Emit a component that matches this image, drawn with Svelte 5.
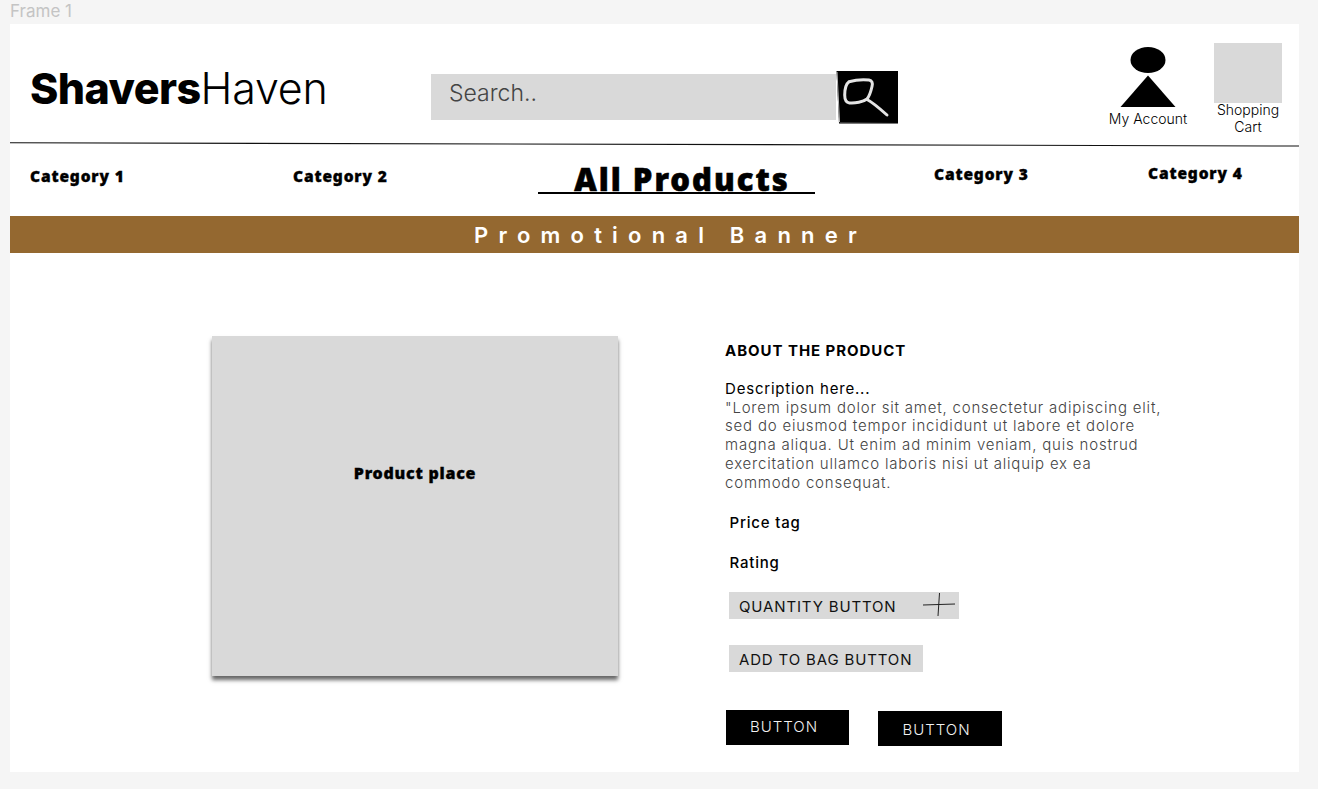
<script>
    const lorem = [
        '"Lorem ipsum dolor sit amet, consectetur adipiscing elit,',
        "sed do eiusmod tempor incididunt ut labore et dolore",
        "magna aliqua. Ut enim ad minim veniam, quis nostrud",
        "exercitation ullamco laboris nisi ut aliquip ex ea",
        "commodo consequat."
    ];
</script>

<div class="page">
    <div class="frame-label">Frame 1</div>
    <div class="frame">
        <header>
            <div class="logo"><b>Shavers</b>Haven</div>
            <div class="search">
                <div class="search-input">Search..</div>
                <button class="search-btn" aria-label="Search">
                    <svg width="62" height="53" viewBox="0 0 62 53">
                        <path d="M0.5 0 L62 0 L62 52.5 L3 52.5 Z" fill="#000" />
                        <path d="M1 1 L3.5 51" stroke="#bbb" stroke-width="1" fill="none" />
                        <path d="M3.5 52 L62 52.5" stroke="#777" stroke-width="1" fill="none" />
                        <path
                            d="M13 10.7 C19 9 28 8.5 33 9 C36 9.5 37 12 36 15.5 C35 20 33.5 25 31 28 C27 31 19 32.5 13.5 32 C10 31.5 8.7 28 8.7 24 C8.7 19 10 13 13 10.7 Z M31 28.5 C36 31 42 36 51 44"
                            stroke="#e4e4e4"
                            stroke-width="3"
                            stroke-linecap="round"
                            fill="none"
                        />
                    </svg>
                </button>
            </div>
            <div class="account">
                <svg width="56" height="61" viewBox="0 0 56 61">
                    <ellipse cx="28" cy="13" rx="17.5" ry="13" />
                    <path d="M28 28.5 L55.5 60 L0.5 60 Z" />
                </svg>
                <span>My Account</span>
            </div>
            <div class="cart">
                <div class="cart-box"></div>
                <span>Shopping<br />Cart</span>
            </div>
        </header>

        <svg class="rule" width="1289" height="5" viewBox="0 0 1289 5">
            <path d="M0 0.8 L1289 4" stroke="#111" stroke-width="1.1" />
        </svg>

        <nav>
            <a class="cat cat-1" href="#c1">Category 1</a>
            <a class="cat cat-2" href="#c2">Category 2</a>
            <a class="all" href="#all">All Products</a>
            <a class="cat cat-3" href="#c3">Category 3</a>
            <a class="cat cat-4" href="#c4">Category 4</a>
        </nav>

        <div class="banner">Promotional Banner</div>

        <main>
            <div class="product">Product place</div>
            <section class="info">
                <h2>ABOUT THE PRODUCT</h2>
                <p class="desc-title">Description here...</p>
                <p class="lorem">
                    {#each lorem as line}
                        <span>{line}</span>
                    {/each}
                </p>
                <p class="tag price">Price tag</p>
                <p class="tag rating">Rating</p>
                <button class="grey qty">
                    QUANTITY BUTTON
                    <svg width="34" height="24" viewBox="0 0 34 24">
                        <path d="M1 12 L33 11 M17.5 0 L16 23" stroke="#222" stroke-width="1" fill="none" />
                    </svg>
                </button>
                <button class="grey bag">ADD TO BAG BUTTON</button>
                <div class="actions">
                    <button class="black">BUTTON</button>
                    <button class="black second">BUTTON</button>
                </div>
            </section>
        </main>
    </div>
</div>

<style>
    :global(body) {
        margin: 0;
        background: #f5f5f5;
    }
    .page {
        width: 1318px;
        height: 789px;
        overflow: hidden;
        font-family: Inter, "Liberation Sans", sans-serif;
        color: #000;
    }
    .frame-label {
        height: 24px;
        padding: 1px 0 0 10px;
        box-sizing: border-box;
        font-size: 17px;
        line-height: 20px;
        color: #c4c4c4;
    }
    .frame {
        width: 1289px;
        height: 748px;
        margin-left: 10px;
        background: #fff;
    }
    header {
        height: 118px;
        display: flex;
        align-items: flex-start;
    }
    .logo {
        width: 401px;
        margin: 39px 0 0 20px;
        font-size: 43px;
        line-height: 50px;
        font-weight: 300;
        letter-spacing: -0.2px;
    }
    .logo b {
        font-weight: 800;
        letter-spacing: -0.55px;
    }
    .search {
        display: flex;
        align-items: center;
        margin-top: 47px;
    }
    .search-input {
        width: 405px;
        height: 46px;
        margin-top: -1px;
        padding-left: 18px;
        box-sizing: border-box;
        background: #d9d9d9;
        font-size: 23px;
        font-weight: 300;
        line-height: 38px;
        color: #444;
    }
    .search-btn {
        width: 62px;
        height: 53px;
        padding: 0;
        border: 0;
        background: none;
    }
    .search-btn svg,
    .rule {
        display: block;
    }
    .account {
        margin: 23px 0 0 208px;
        width: 84px;
        display: flex;
        flex-direction: column;
        align-items: center;
        font-size: 14px;
        font-weight: 300;
        line-height: 17px;
    }
    .account span {
        margin-top: 2px;
    }
    .cart {
        margin: 19px 0 0 24px;
        width: 68px;
        font-size: 14px;
        font-weight: 300;
        line-height: 17px;
        text-align: center;
    }
    .cart-box {
        height: 60px;
        background: #d9d9d9;
    }
    .cart span {
        display: block;
        margin: -2px -6px 0;
    }
    nav {
        height: 70px;
        margin-top: -1px;
        padding-left: 20px;
        display: grid;
        grid-template-columns: 263px 245px 396px 214px auto;
        font-family: "Noto Sans", "Open Sans", sans-serif;
        font-weight: 900;
        color: #000;
    }
    nav a {
        color: inherit;
        text-decoration: none;
        justify-self: start;
    }
    .cat {
        font-size: 15.5px;
        line-height: 20px;
        letter-spacing: 0.85px;
        -webkit-text-stroke: 0.35px #000;
    }
    .cat-1,
    .cat-2 {
        margin-top: 20px;
    }
    .cat-3 {
        margin-top: 18px;
    }
    .cat-4 {
        margin-top: 17px;
    }
    .all {
        width: 277px;
        height: 48px;
        padding: 14px 0 0 11px;
        box-sizing: border-box;
        border-bottom: 2px solid #000;
        font-size: 31px;
        line-height: 38px;
        letter-spacing: 2px;
        text-align: center;
        -webkit-text-stroke: 0.6px #000;
    }
    .banner {
        height: 37px;
        padding: 1px 0 0 32px;
        box-sizing: border-box;
        background: #946830;
        color: #fff;
        font-size: 22px;
        font-weight: 600;
        line-height: 37px;
        letter-spacing: 10.2px;
        text-align: center;
    }
    main {
        display: flex;
        align-items: flex-start;
        padding: 83px 0 0 202px;
    }
    .product {
        width: 406px;
        height: 340px;
        display: flex;
        align-items: center;
        justify-content: center;
        background: #d9d9d9;
        box-shadow: 0 4px 4px rgba(0, 0, 0, 0.6);
        font-family: "Noto Sans", "Open Sans", sans-serif;
        font-size: 16px;
        font-weight: 900;
        letter-spacing: 0.75px;
        -webkit-text-stroke: 0.35px #000;
        padding-bottom: 67px;
        box-sizing: border-box;
    }
    .info {
        width: 500px;
        margin-left: 107px;
        font-size: 15px;
        line-height: 19px;
        letter-spacing: 0.8px;
    }
    h2 {
        margin: 5px 0 0;
        font-size: 15px;
        font-weight: 700;
        line-height: 19px;
        letter-spacing: 0.95px;
    }
    p {
        margin: 0;
    }
    .desc-title {
        margin-top: 19px;
    }
    .lorem {
        padding-top: 0.5px;
        font-weight: 300;
        line-height: 18.75px;
        color: #444;
    }
    .lorem span {
        display: block;
        white-space: nowrap;
    }
    .tag {
        margin-left: 4.5px;
        font-weight: 500;
    }
    .price {
        margin-top: 20.5px;
    }
    .rating {
        margin-top: 21px;
    }
    .grey {
        display: flex;
        align-items: center;
        height: 27px;
        margin-left: 4px;
        padding: 2px 0 0 10px;
        border: 0;
        background: #d9d9d9;
        font: inherit;
        letter-spacing: 0.85px;
        color: #111;
    }
    .qty {
        width: 230px;
        margin-top: 20px;
    }
    .qty svg {
        margin: -3px 0 0 25px;
    }
    .bag {
        width: 194px;
        margin-top: 26px;
    }
    .actions {
        display: flex;
        align-items: flex-start;
        gap: 29px;
        margin: 38px 0 0 1px;
    }
    .black {
        width: 123px;
        height: 35px;
        border: 0;
        padding: 0 7px 2px 0;
        background: #000;
        color: #f2f2f2;
        font: inherit;
        font-weight: 300;
        letter-spacing: 1px;
    }
    .second {
        width: 124px;
        margin-top: 1px;
        padding: 3px 7px 0 0;
    }
</style>
